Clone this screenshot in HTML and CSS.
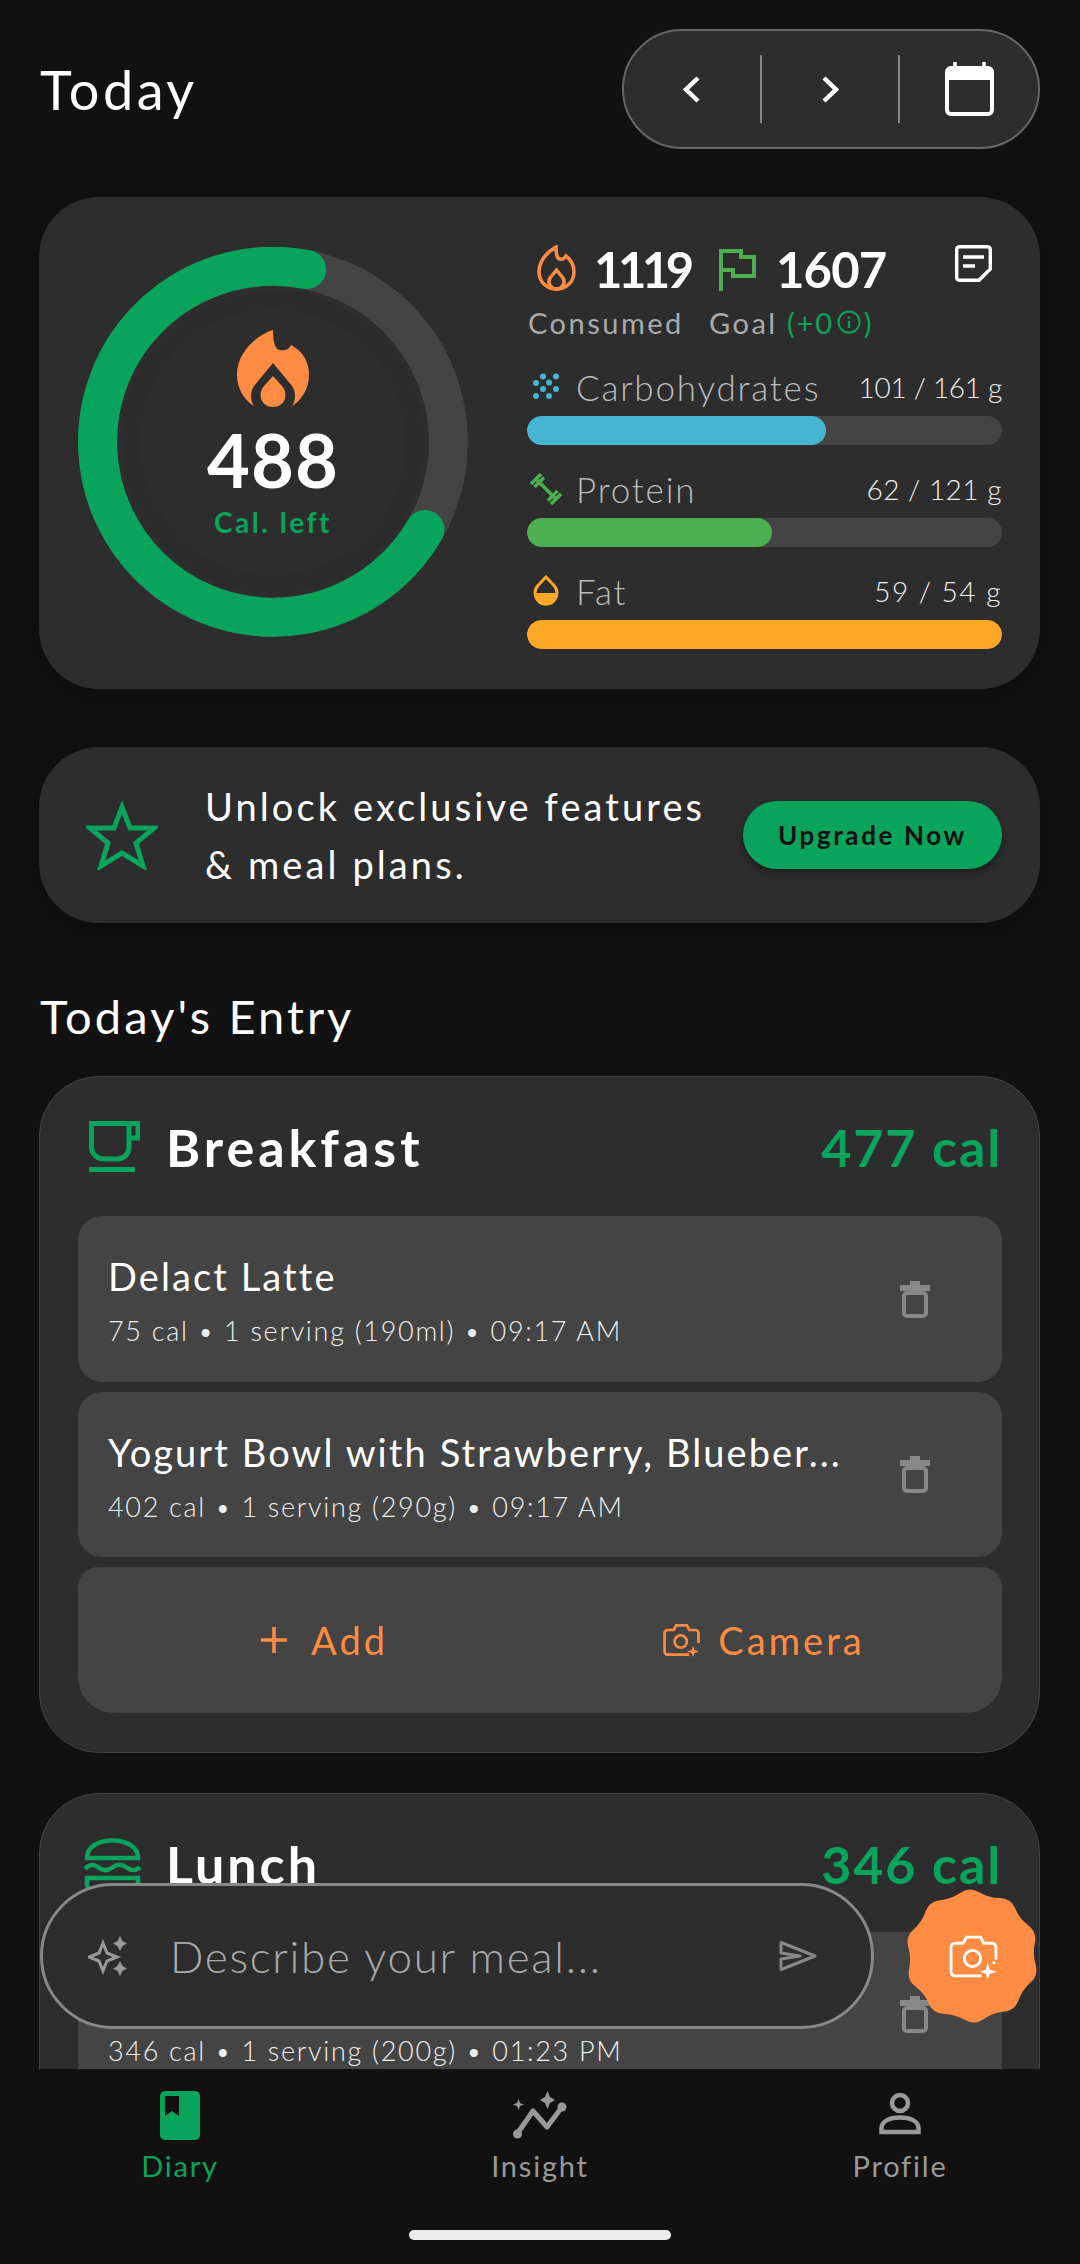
FILE: index.html
```html
<!DOCTYPE html>
<html lang="en">
<head>
<meta charset="utf-8">
<title>Today</title>
<link rel="stylesheet" href="styles.css">
</head>
<body>
<div class="app">
  <main class="content">
    <header class="top">
      <h1 class="today">Today</h1>
      <div class="datenav">
        <span class="navcell"><svg width="17" height="27" viewBox="0 0 17 27"><path d="M15 2 3 13.5 15 25" class="s-white s-chev"/></svg></span>
        <span class="navcell navcell-mid"><svg width="17" height="27" viewBox="0 0 17 27"><path d="M2 2 14 13.5 2 25" class="s-white s-chev"/></svg></span>
        <span class="navcell navcell-cal"><svg width="49" height="54" viewBox="0 0 49 54"><path d="M10 0v7M39 0v7" class="s-white"/><rect x="2" y="6" width="45" height="46" rx="4" class="s-white s-cal"/><rect x="2" y="6" width="45" height="12" fill="#fff"/></svg></span>
      </div>
    </header>

    <section class="summary">
      <div class="ring">
        <svg class="ring-svg" width="390" height="390" viewBox="0 0 390 390">
          <circle cx="195" cy="195" r="175.500" fill="none" stroke="#444" stroke-width="39"/>
          <circle cx="195" cy="195" r="142" fill="none" stroke="#2b2b2b" stroke-width="18"/>
          <path d="M347 282.500A175.500 175.500 0 1 1 228.700 22.500" fill="none" stroke="#08a45c" stroke-width="39" stroke-linecap="round"/>
        </svg>
        <div class="ring-center">
          <svg width="72" height="77" viewBox="0 0 72 77"><path fill="#ff8c42" d="M36 0C33 0 0 14 0 45C0 58 7 70 17 76C13 70 13 62 17 56L36 33L55 56C59 62 59 70 55 76C65 70 72 58 72 45C72 32 66 21 54 15C52 20 46 21 42 20C38 18 36 12 36 0Z"/><path fill="#ff8c42" d="M36 46L45 56C52 64 48 77 36 77C24 77 20 64 27 56Z"/></svg>
          <div class="left-num">488</div>
          <div class="left-label">Cal. left</div>
        </div>
      </div>
      <div class="stats">
        <div class="stat-row">
          <svg class="ico-fire" width="39" height="46" viewBox="0 0 39 46"><path class="s-orange" d="M19 2C9 8 2 16 2 27C2 37 10 44 19.500 44C29 44 37 37 37 27C37 20 33 14 29 11C27 15 23 15 21 13C19 10 19 6 19 2Z"/><path class="s-orange" d="M19.500 25L13 33C10 38 14 44 19.500 44C25 44 29 38 26 33Z"/></svg>
          <span class="stat-num stat-num-a">1119</span>
          <svg class="ico-flag" width="37" height="42" viewBox="0 0 37 42"><path class="s-green" d="M2 42V2H22V8H35V27H14V21H2"/></svg>
          <span class="stat-num stat-num-b">1607</span>
          <svg class="ico-notes" width="37" height="37" viewBox="0 0 37 37"><path d="M4.500 1.700H32.500A3 3 0 0 1 35.300 4.500V24L24 35.300H4.500A3 3 0 0 1 1.700 32.500V4.500A3 3 0 0 1 4.500 1.700ZM8 12H29M8 21H20" fill="none" stroke="#fff" stroke-width="3.400"/></svg>
        </div>
        <div class="stat-labels">
          <span class="lbl-consumed">Consumed</span>
          <span class="lbl-goal">Goal</span>
          <span class="lbl-extra">(+0<svg class="ico-info" width="24" height="24" viewBox="0 0 24 24"><circle cx="12" cy="12" r="10.500" fill="none" stroke="#08a45c" stroke-width="2"/><path d="M12 11v7M12 6.500v2" stroke="#08a45c" stroke-width="2.400"/></svg>)</span>
        </div>

        <div class="macro macro-first">
          <div class="macro-head">
            <span class="macro-ico"><svg width="26" height="27" viewBox="0 0 26 27" fill="#46b5d3"><circle cx="10" cy="3.500" r="3"/><circle cx="23" cy="3.500" r="3"/><circle cx="3" cy="10" r="3"/><circle cx="16" cy="9.500" r="3"/><circle cx="10" cy="16" r="3"/><circle cx="23" cy="16" r="3"/><circle cx="3" cy="23" r="3"/><circle cx="16" cy="23" r="3"/></svg></span>
            <span class="macro-name">Carbohydrates</span>
            <span class="macro-val macro-val-carb">101 / 161 g</span>
          </div>
          <div class="bar"><div class="fill fill-carb" style="width:299px"></div></div>
        </div>
        <div class="macro">
          <div class="macro-head">
            <span class="macro-ico macro-ico-wide"><svg width="32" height="32" viewBox="0 0 32 32" fill="none" stroke="#4caf50"><path d="M7 7 25 25" stroke-width="3.500"/><path d="M1 11 11 1M4.500 14 14 4.500M18 27.500 27.500 18M21 31 31 21" stroke-width="3.500"/></svg></span>
            <span class="macro-name">Protein</span>
            <span class="macro-val">62 / 121 g</span>
          </div>
          <div class="bar"><div class="fill fill-pro" style="width:245px"></div></div>
        </div>
        <div class="macro">
          <div class="macro-head">
            <span class="macro-ico"><svg width="26" height="31" viewBox="0 0 26 31"><path d="M13 2 21 10.500C27 17 23 29 13 29C3 29 -1 17 5 10.500Z" fill="none" stroke="#ffa726" stroke-width="3"/><path d="M1 18H25C25 25 19.500 30.500 13 30.500C6.500 30.500 1 25 1 18Z" fill="#ffa726"/></svg></span>
            <span class="macro-name">Fat</span>
            <span class="macro-val macro-val-fat">59 / 54 g</span>
          </div>
          <div class="bar"><div class="fill fill-fat" style="width:100%"></div></div>
        </div>
      </div>
    </section>

    <section class="upgrade">
      <svg class="ico-star" width="72" height="69" viewBox="0 0 72 69"><polygon points="36,6 44,27 68,27 50,42 57,65 36,52 15,65 22,42 4,27 28,27" fill="none" stroke="#08a45c" stroke-width="5"/></svg>
      <p class="upgrade-text">Unlock exclusive features<br>&amp; meal plans.</p>
      <span class="upgrade-btn">Upgrade Now</span>
    </section>

    <h2 class="entry-title">Today's Entry</h2>

    <section class="meal">
      <div class="meal-head">
        <svg class="meal-ico" width="51" height="51" viewBox="0 0 51 51"><path d="M2.500 2.500H40V26C40 33 35 38 28 38H15C8 38 2.500 33 2.500 26ZM40 2.500H49V17H40M0 48.500H46" fill="none" stroke="#08a45c" stroke-width="5"/></svg>
        <span class="meal-name">Breakfast</span>
        <span class="meal-cal">477 cal</span>
      </div>
      <div class="items">
        <article class="item item-first">
          <div class="item-text">
            <div class="item-name">Delact Latte</div>
            <div class="item-sub">75 cal • 1 serving (190ml) • 09:17 AM</div>
          </div>
          <svg class="trash" width="30" height="37" viewBox="0 0 30 37"><path d="M0 4H10V0H20V4H30V10H0Z" fill="#888"/><rect x="4" y="12" width="22" height="23" rx="3" fill="none" stroke="#888" stroke-width="4"/></svg>
        </article>
        <article class="item">
          <div class="item-text">
            <div class="item-name">Yogurt Bowl with Strawberry, Blueber...</div>
            <div class="item-sub">402 cal • 1 serving (290g) • 09:17 AM</div>
          </div>
          <svg class="trash" width="30" height="37" viewBox="0 0 30 37"><path d="M0 4H10V0H20V4H30V10H0Z" fill="#888"/><rect x="4" y="12" width="22" height="23" rx="3" fill="none" stroke="#888" stroke-width="4"/></svg>
        </article>
        <div class="actions">
          <span class="action action-add"><svg width="26" height="26" viewBox="0 0 26 26"><path d="M13 0V26M0 13H26" class="s-orange"/></svg><span>Add</span></span>
          <span class="action action-cam"><svg width="37" height="34" viewBox="0 0 48 44"><path d="M34 41H6A4 4 0 0 1 2 37V13A4 4 0 0 1 6 9H14L17 3H31L34 9H42A4 4 0 0 1 46 13V26" class="s-orange"/><circle cx="23" cy="24" r="8" class="s-orange"/><path d="M39 29 41 35 47 37 41 39 39 44 37 39 31 37 37 35Z" fill="#ff8c42"/></svg><span>Camera</span></span>
        </div>
      </div>
    </section>

    <section class="meal meal-lunch">
      <div class="meal-head">
        <svg class="meal-ico" width="57" height="55" viewBox="0 0 57 55" fill="none" stroke="#08a45c" stroke-width="4.500"><path d="M3 20C3 9 14 2.500 28.500 2.500C43 2.500 54 9 54 20Z"/><path d="M1 31C5 26 10 26 14.500 29.500C19 33 23.500 33 28.500 29.500C33 26 38 26 42.500 29.500C47 33 52 33 56 29"/><path d="M3 40H54V46C54 50 50 52 46 52H11C7 52 3 50 3 46Z"/></svg>
        <span class="meal-name">Lunch</span>
        <span class="meal-cal">346 cal</span>
      </div>
      <div class="items">
        <article class="item">
          <div class="item-text item-text-lunch">
            <div class="item-sub">346 cal • 1 serving (200g) • 01:23 PM</div>
          </div>
          <svg class="trash" width="30" height="37" viewBox="0 0 30 37"><path d="M0 4H10V0H20V4H30V10H0Z" fill="#888"/><rect x="4" y="12" width="22" height="23" rx="3" fill="none" stroke="#888" stroke-width="4"/></svg>
        </article>
      </div>
    </section>
  </main>

  <div class="composer">
    <svg class="ico-spark" width="42" height="40" viewBox="0 0 42 40"><path d="M15 7 19 17 29 21 19 25 15 35 11 25 1 21 11 17Z" fill="none" stroke="#999" stroke-width="3"/><path d="M32 0 34.500 5 39 7.500 34.500 10 32 15 29.500 10 25 7.500 29.500 5ZM32 25 34.500 30 39 32.500 34.500 35 32 40 29.500 35 25 32.500 29.500 30Z" fill="#999"/></svg>
    <span class="composer-text">Describe your meal...</span>
    <svg class="ico-send" width="40" height="32" viewBox="0 0 40 32"><path d="M2 2.500 36 16 2 29.500V19L21 16 2 13Z" fill="none" stroke="#888" stroke-width="3" stroke-linejoin="round"/></svg>
  </div>

  <button class="fab" aria-label="Camera">
    <svg class="fab-shape" width="144" height="144" viewBox="0 0 144 144"><path fill="#ff8c42" d="M60.450 8.800Q69.600 2.500 79.150 8.150Q88.700 13.800 99.800 14.100Q110.900 14.400 115.300 24.600Q119.700 34.800 128.500 41.500Q137.300 48.200 134.900 59.050Q132.500 69.900 135.650 80.550Q138.800 91.200 130.500 98.500Q122.200 105.800 118.500 116.300Q114.800 126.800 103.750 127.850Q92.700 128.900 83.550 135.200Q74.400 141.500 64.850 135.850Q55.300 130.200 44.200 129.900Q33.100 129.600 28.700 119.400Q24.300 109.200 15.500 102.500Q6.700 95.800 9.100 84.950Q11.500 74.100 8.350 63.450Q5.200 52.800 13.500 45.500Q21.800 38.200 25.500 27.700Q29.200 17.200 40.250 16.150Q51.300 15.100 60.450 8.800Z"/></svg>
    <svg class="fab-cam" width="49" height="45" viewBox="0 0 48 44"><path d="M32 41H6A4 4 0 0 1 2 37V13A4 4 0 0 1 6 9H14L17 3H31L34 9H42A4 4 0 0 1 46 13V25" fill="none" stroke="#fff" stroke-width="2.800"/><circle cx="23" cy="24" r="8" fill="none" stroke="#fff" stroke-width="2.800"/><path d="M38 28 40 35 47 37 40 39 38 45 36 39 30 37 36 35Z" fill="#fff"/><circle cx="44" cy="28" r="1.500" fill="#fff"/></svg>
  </button>

  <nav class="tabs">
    <div class="tab tab-on">
      <svg width="40" height="49" viewBox="0 0 40 49"><rect width="40" height="49" rx="5" fill="#08a45c"/><path d="M5 5H19V25L12 20 5 25Z" fill="#111"/></svg>
      <span>Diary</span>
    </div>
    <div class="tab">
      <svg width="54" height="49" viewBox="0 0 54 49"><path d="M4 43 20 20 34 36 49 16" fill="none" stroke="#999" stroke-width="5" stroke-linecap="round" stroke-linejoin="round"/><circle cx="4.500" cy="43" r="4.500" fill="#999"/><circle cx="49" cy="16" r="4.500" fill="#999"/><path d="M34.500 0 37 6 42 9 37 12 34.500 18 32 12 27 9 32 6ZM5.500 8 7 12 11 13.500 7 15 5.500 19 4 15 0 13.500 4 12Z" fill="#999"/></svg>
      <span>Insight</span>
    </div>
    <div class="tab">
      <svg width="42" height="49" viewBox="0 0 42 49" fill="none" stroke="#999" stroke-width="4.500"><circle cx="21" cy="12" r="8"/><path d="M2.500 41V37C2.500 30 11 26.500 21 26.500C31 26.500 39.500 30 39.500 37V41Z"/></svg>
      <span>Profile</span>
    </div>
  </nav>
  <div class="homebar"></div>
</div>
</body>
</html>
```
FILE: styles.css
```css
* { box-sizing: border-box; }
html, body { margin: 0; padding: 0; background: #111; }
body { font-family: Lato, "Noto Sans", sans-serif; color: #fff; }
svg { display: block; flex: none; }
.s-white { fill: none; stroke: #fff; stroke-width: 3.5; }
.s-chev { stroke-width: 4.5; }
.s-cal { stroke-width: 4; }
.s-orange { fill: none; stroke: #ff8c42; stroke-width: 3.5; }
.s-green { fill: none; stroke: #4caf50; stroke-width: 4; }

.app { position: relative; width: 1080px; height: 2264px; overflow: hidden; background: #111; }
.content { height: 2069px; overflow: hidden; padding: 29px 40px 0 39px; }

.top { display: flex; justify-content: space-between; align-items: center; height: 120px; }
.today { margin: 0; padding-left: 1px; font-size: 54px; font-weight: 400; letter-spacing: 3.500px; }
.datenav { display: flex; width: 418px; height: 120px; align-items: center; background: #2d2d2d; border: 2px solid #666; border-radius: 60px; }
.navcell { display: flex; align-items: center; justify-content: center; height: 68px; width: 136px; padding-right: 2px; }
.navcell-mid { width: 140px; padding: 0; border-left: 2px solid #888; border-right: 2px solid #888; }
.navcell-cal { width: 136px; padding: 0 0 0 3px; }

.summary { display: flex; height: 492px; margin-top: 48px; padding: 48px 38px 0 39px; background: #2d2d2d; border-radius: 60px; box-shadow: 0 8px 24px rgba(0,0,0,.25); }
.ring { position: relative; width: 390px; height: 390px; margin-top: 2px; flex: none; }
.ring-center { position: absolute; inset: 0; display: flex; flex-direction: column; align-items: center; padding-top: 83px; }
.left-num { margin-top: 9px; height: 88px; line-height: 88px; font-size: 74px; font-weight: 700; letter-spacing: 1px; }
.left-label { height: 36px; line-height: 36px; margin-top: 0; font-size: 28px; font-weight: 700; color: #08a45c; letter-spacing: 2.500px; }

.stats { width: 475px; margin-left: 59px; flex: none; }
.stat-row { display: flex; align-items: center; height: 46px; position: relative; }
.ico-fire { margin-left: 10px; }
.stat-num { font-size: 49px; font-weight: 700; line-height: 46px; padding-top: 2px; }
.stat-num-a { margin-left: 18px; width: 125px; letter-spacing: -4.500px; }
.ico-flag { margin-left: 0; margin-top: 4px; }
.stat-num-b { margin-left: 20px; letter-spacing: -.8px; }
.ico-notes { position: absolute; left: 428px; top: 0; }
.stat-labels { display: flex; align-items: center; height: 38px; margin-top: 12px; font-size: 29px; color: #aaa; letter-spacing: 2.500px; padding-left: 1px; }
.lbl-consumed { width: 181px; }
.lbl-goal { width: 78px; }
.lbl-extra { display: flex; align-items: center; gap: 3px; color: #08a45c; letter-spacing: 1.800px; }

.macro { margin-top: 29px; }
.macro-first { margin-top: 31px; }
.macro-head { display: flex; align-items: center; height: 38px; margin-bottom: 6px; padding-bottom: 9px; }
.macro-ico { display: flex; width: 49px; padding-left: 6px; }
.macro-ico-wide { padding-left: 3px; }
.macro-name { font-size: 35px; font-weight: 300; color: #bbb; letter-spacing: 1.800px; }
.macro-val { margin-left: auto; font-size: 28px; font-weight: 300; color: #eee; letter-spacing: .5px; }
.macro-val-carb { letter-spacing: -.3px; }
.macro-val-fat { letter-spacing: 1.500px; }
.bar { height: 29px; background: #444; border-radius: 15px; overflow: hidden; }
.fill { height: 100%; border-radius: 15px; }
.fill-carb { background: #46b5d3; }
.fill-pro { background: #4caf50; }
.fill-fat { background: #ffa726; }

.upgrade { display: flex; align-items: center; height: 176px; margin-top: 58px; padding: 0 38px 0 47px; background: #2d2d2d; border-radius: 60px; box-shadow: 0 8px 24px rgba(0,0,0,.25); }
.upgrade-text { margin: 0 0 0 47px; width: 538px; font-size: 38px; line-height: 58px; letter-spacing: 3.100px; }
.upgrade-btn { display: flex; align-items: center; justify-content: center; width: 259px; height: 68px; background: #08a45c; border-radius: 34px; color: #111; font-size: 26px; font-weight: 700; letter-spacing: 2.600px; box-shadow: 0 4px 8px rgba(0,0,0,.35); }

.entry-title { margin: 62px 0 29px; height: 62px; line-height: 62px; font-size: 47px; font-weight: 400; letter-spacing: 3.100px; padding-left: 1px; }

.meal { padding: 44px 37px 41px 38px; background: #2d2d2d; border: 1px solid #444; border-radius: 60px; height: 677px; margin: 0; }
.meal-lunch { height: 400px; margin-top: 40px; }
.meal-head { display: flex; align-items: center; height: 51px; }
.meal-ico { margin-left: 11px; }
.meal-name { margin-left: 26px; font-size: 52px; font-weight: 700; letter-spacing: 4px; }
.meal-cal { margin-left: auto; font-size: 52px; font-weight: 700; color: #08a45c; letter-spacing: 1.900px; }
.meal-lunch .meal-ico { margin-left: 6px; margin-top: 4px; }
.meal-lunch .meal-name { margin-left: 25px; letter-spacing: 3px; }
.items { display: flex; flex-direction: column; gap: 10px; margin-top: 44px; }
.meal-lunch .items { margin-top: 43px; }
.item { display: flex; align-items: center; justify-content: space-between; height: 165px; padding: 0 72px 0 30px; background: #444; border-radius: 24px; }
.item-first { height: 166px; }
.item-text { width: 750px; padding-top: 2px; }
.item-text-lunch { padding-top: 60px; }
.item-name { height: 50px; line-height: 50px; font-size: 38px; letter-spacing: 2.100px; white-space: nowrap; }
.item-sub { margin-top: 12px; height: 36px; line-height: 36px; font-size: 27px; font-weight: 300; color: #eee; letter-spacing: 1.700px; white-space: nowrap; }
.actions { display: flex; height: 146px; align-items: center; background: #444; border-radius: 20px 20px 36px 36px; position: relative; }
.action { display: flex; align-items: center; color: #ff8c42; font-size: 38px; letter-spacing: 3.100px; }
.action-add { margin-left: 183px; gap: 24px; }
.action-cam { margin-left: 275px; gap: 18px; }

.composer { position: absolute; left: 40px; top: 1883px; width: 834px; height: 146px; display: flex; align-items: center; padding-left: 45px; background: #2d2d2d; border: 3px solid #888; border-radius: 73px; }
.composer-text { margin-left: 40px; font-size: 44px; font-weight: 300; color: #aaa; letter-spacing: 1.700px; }
.ico-send { position: absolute; left: 736px; top: 54px; }

.fab { position: absolute; left: 900px; top: 1884px; width: 144px; height: 144px; padding: 0; border: 0; background: none; }
.fab-shape { position: absolute; inset: 0; }
.fab-cam { position: absolute; left: 49px; top: 50px; }

.tabs { position: absolute; left: 0; top: 2069px; width: 1080px; height: 195px; display: flex; justify-content: space-between; padding: 22px 0 0 0; background: #111; }
.tab { width: 360px; display: flex; flex-direction: column; align-items: center; font-size: 29px; color: #999; letter-spacing: 1.800px; }
.tab span { margin-top: 8px; height: 36px; line-height: 36px; }
.tab-on { color: #08a45c; }
.homebar { position: absolute; left: 409px; top: 2230px; width: 262px; height: 10px; border-radius: 5px; background: #ececec; }
```
